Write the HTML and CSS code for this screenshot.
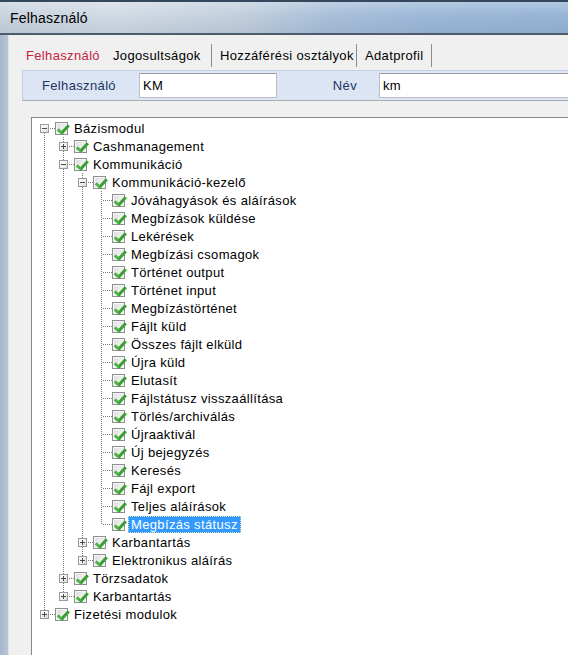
FILE: index.html
```html
<!DOCTYPE html>
<html lang="hu">
<head>
<meta charset="utf-8">
<title>Felhasználó</title>
<link rel="stylesheet" href="styles.css">
</head>
<body>
<div class="titlebar"><span class="title">Felhasználó</span></div>
<div class="frame">
  <div class="edge"></div>
  <div class="client">
    <div class="tabs">
      <span class="tab active">Felhasználó</span>
      <span class="tab t2">Jogosultságok</span>
      <span class="tab t3">Hozzáférési osztályok</span>
      <span class="tab t4">Adatprofil</span>
    </div>
    <div class="page">
      <div class="fields">
        <span class="flabel first">Felhasználó</span>
        <input class="input in1" type="text" value="KM" readonly>
        <span class="flabel second">Név</span>
        <input class="input in2" type="text" value="km" readonly>
      </div>
      <div class="tree">
        <div class="row"><span class="n top"><i class="exp minus"></i></span><span class="cb"></span><span class="lbl">Bázismodul</span></div>
        <div class="row"><span class="g v"></span><span class="n mid"><i class="exp plus"></i></span><span class="cb"></span><span class="lbl">Cashmanagement</span></div>
        <div class="row"><span class="g v"></span><span class="n mid"><i class="exp minus"></i></span><span class="cb"></span><span class="lbl">Kommunikáció</span></div>
        <div class="row"><span class="g v"></span><span class="g v"></span><span class="n mid"><i class="exp minus"></i></span><span class="cb"></span><span class="lbl">Kommunikáció-kezelő</span></div>
        <div class="row"><span class="g v"></span><span class="g v"></span><span class="g v"></span><span class="n mid"></span><span class="cb"></span><span class="lbl">Jóváhagyások és aláírások</span></div>
        <div class="row"><span class="g v"></span><span class="g v"></span><span class="g v"></span><span class="n mid"></span><span class="cb"></span><span class="lbl">Megbízások küldése</span></div>
        <div class="row"><span class="g v"></span><span class="g v"></span><span class="g v"></span><span class="n mid"></span><span class="cb"></span><span class="lbl">Lekérések</span></div>
        <div class="row"><span class="g v"></span><span class="g v"></span><span class="g v"></span><span class="n mid"></span><span class="cb"></span><span class="lbl">Megbízási csomagok</span></div>
        <div class="row"><span class="g v"></span><span class="g v"></span><span class="g v"></span><span class="n mid"></span><span class="cb"></span><span class="lbl">Történet output</span></div>
        <div class="row"><span class="g v"></span><span class="g v"></span><span class="g v"></span><span class="n mid"></span><span class="cb"></span><span class="lbl">Történet input</span></div>
        <div class="row"><span class="g v"></span><span class="g v"></span><span class="g v"></span><span class="n mid"></span><span class="cb"></span><span class="lbl">Megbízástörténet</span></div>
        <div class="row"><span class="g v"></span><span class="g v"></span><span class="g v"></span><span class="n mid"></span><span class="cb"></span><span class="lbl">Fájlt küld</span></div>
        <div class="row"><span class="g v"></span><span class="g v"></span><span class="g v"></span><span class="n mid"></span><span class="cb"></span><span class="lbl">Összes fájlt elküld</span></div>
        <div class="row"><span class="g v"></span><span class="g v"></span><span class="g v"></span><span class="n mid"></span><span class="cb"></span><span class="lbl">Újra küld</span></div>
        <div class="row"><span class="g v"></span><span class="g v"></span><span class="g v"></span><span class="n mid"></span><span class="cb"></span><span class="lbl">Elutasít</span></div>
        <div class="row"><span class="g v"></span><span class="g v"></span><span class="g v"></span><span class="n mid"></span><span class="cb"></span><span class="lbl">Fájlstátusz visszaállítása</span></div>
        <div class="row"><span class="g v"></span><span class="g v"></span><span class="g v"></span><span class="n mid"></span><span class="cb"></span><span class="lbl">Törlés/archiválás</span></div>
        <div class="row"><span class="g v"></span><span class="g v"></span><span class="g v"></span><span class="n mid"></span><span class="cb"></span><span class="lbl">Újraaktivál</span></div>
        <div class="row"><span class="g v"></span><span class="g v"></span><span class="g v"></span><span class="n mid"></span><span class="cb"></span><span class="lbl">Új bejegyzés</span></div>
        <div class="row"><span class="g v"></span><span class="g v"></span><span class="g v"></span><span class="n mid"></span><span class="cb"></span><span class="lbl">Keresés</span></div>
        <div class="row"><span class="g v"></span><span class="g v"></span><span class="g v"></span><span class="n mid"></span><span class="cb"></span><span class="lbl">Fájl export</span></div>
        <div class="row"><span class="g v"></span><span class="g v"></span><span class="g v"></span><span class="n mid"></span><span class="cb"></span><span class="lbl">Teljes aláírások</span></div>
        <div class="row"><span class="g v"></span><span class="g v"></span><span class="g v"></span><span class="n end"></span><span class="cb"></span><span class="lbl sel">Megbízás státusz</span></div>
        <div class="row"><span class="g v"></span><span class="g v"></span><span class="n mid"><i class="exp plus"></i></span><span class="cb"></span><span class="lbl">Karbantartás</span></div>
        <div class="row"><span class="g v"></span><span class="g v"></span><span class="n end"><i class="exp plus"></i></span><span class="cb"></span><span class="lbl">Elektronikus aláírás</span></div>
        <div class="row"><span class="g v"></span><span class="n mid"><i class="exp plus"></i></span><span class="cb"></span><span class="lbl">Törzsadatok</span></div>
        <div class="row"><span class="g v"></span><span class="n end"><i class="exp plus"></i></span><span class="cb"></span><span class="lbl">Karbantartás</span></div>
        <div class="row"><span class="n end"><i class="exp plus"></i></span><span class="cb"></span><span class="lbl">Fizetési modulok</span></div>
      </div>
    </div>
  </div>
</div>
</body>
</html>
```
FILE: styles.css
```css
* { box-sizing: border-box; }
html, body { margin: 0; padding: 0; }
body {
  width: 568px;
  height: 655px;
  overflow: hidden;
  font-family: "Liberation Sans", Arial, sans-serif;
  font-size: 13px;
  letter-spacing: 0.35px;
  color: #000;
  background: #aebfd2;
}

/* title bar (glass) */
.titlebar {
  height: 35px;
  border-top: 2px solid #34475d;
  border-bottom: 2px solid #4d5c6c;
  background:
    linear-gradient(180deg, rgba(255,255,255,0.25) 0%, rgba(255,255,255,0) 40%, rgba(60,80,110,0.10) 100%),
    linear-gradient(90deg, #c9d4df 0%, #d2dbe4 20%, #c3d0de 42%, #a9c0da 58%, #9db9d8 75%, #98b5d5 100%);
  display: flex;
  align-items: center;
  padding-left: 10px;
}
.title { font-size: 14px; letter-spacing: 0.2px; color: #000; }

.frame {
  display: flex;
  height: 620px;
}
.edge {
  width: 8px;
  flex: none;
  background: linear-gradient(90deg, #a3b6cb, #b7c7d8);
}
.client {
  flex: 1;
  min-width: 0;
  overflow: hidden;
  background: #f0f0f0;
  border-left: 1px solid #dfe3e8;
}

/* tabs */
.tabs {
  display: flex;
  margin-top: 9px;
  height: 23px;
  line-height: 23px;
}
.tab { flex: none; white-space: nowrap; }
.tab.active { color: #c4243a; padding-left: 17px; width: 98px; }
.t2 { width: 105px; padding-left: 6px; border-right: 1px solid #8c8c8c; }
.t3 { width: 145px; padding-left: 8px; border-right: 1px solid #8c8c8c; }
.t4 { width: 75px; padding-left: 8px; border-right: 1px solid #8c8c8c; }

.page {
  padding-left: 13px;
  padding-top: 3px;
  height: 600px;
}

/* field row */
.fields {
  display: flex;
  align-items: center;
  width: 620px;
  height: 31px;
  background: #dbe5f3;
  border-top: 1px solid #c3cfdf;
  border-left: 1px solid #c3cfdf;
  border-bottom: 1px solid #a7acb3;
  padding-left: 19px;
}
.flabel { color: #1c3563; flex: none; }
.flabel.first { width: 97px; }
.flabel.second { width: 102px; text-align: right; padding-right: 22px; }
.input {
  flex: none;
  height: 25px;
  margin: 0;
  border: 1px solid #b9bcc2;
  border-top-color: #9a9ca1;
  background: #fff;
  font-family: "Liberation Sans", Arial, sans-serif;
  font-size: 13px;
  letter-spacing: 0.35px;
  color: #000;
  padding: 0 0 0 3px;
  outline: none;
}
.in1 { width: 138px; }
.in2 { width: 220px; }

/* tree */
.tree {
  margin-top: 16px;
  margin-left: 9px;
  width: 620px;
  height: 560px;
  background: #fff;
  border-top: 1px solid #828790;
  border-left: 1px solid #828790;
  padding-top: 1px;
  padding-left: 3px;
}
.row {
  display: flex;
  align-items: center;
  height: 18px;
  white-space: nowrap;
}
.g, .n {
  flex: none;
  position: relative;
  width: 19px;
  height: 18px;
}
.v::before, .n::before {
  content: "";
  position: absolute;
  left: 9px;
  width: 1px;
  top: 0;
  bottom: 0;
  background: repeating-linear-gradient(180deg, #7a7a7a 0 1px, transparent 1px 2px);
}
.n.top::before { top: 10px; }
.n.end::before { bottom: auto; height: 10px; }
.n::after {
  content: "";
  position: absolute;
  left: 11px;
  top: 9px;
  width: 10px;
  height: 1px;
  background: repeating-linear-gradient(90deg, #7a7a7a 0 1px, transparent 1px 2px);
}
.exp {
  position: absolute;
  z-index: 1;
  left: 5px;
  top: 5px;
  width: 9px;
  height: 9px;
  border: 1px solid #9a9a9a;
  background: linear-gradient(135deg, #ffffff 0%, #f2f2f2 50%, #d9d9d9 100%);
}
.exp::before {
  content: "";
  position: absolute;
  left: 1px;
  top: 3px;
  width: 5px;
  height: 1px;
  background: #4a4a4a;
}
.exp.plus::after {
  content: "";
  position: absolute;
  left: 3px;
  top: 1px;
  width: 1px;
  height: 5px;
  background: #4a4a4a;
}

.cb {
  flex: none;
  position: relative;
  width: 13px;
  height: 13px;
  margin-left: 1px;
  border: 1px solid #8e8f8f;
  background: linear-gradient(135deg, #dcdcdc 0%, #ececec 45%, #fbfbfb 100%);
  box-shadow: inset 0 0 0 1px #f6f6f6;
}
.cb::after {
  content: "";
  position: absolute;
  left: 3px;
  top: -1px;
  width: 4px;
  height: 9px;
  border-right: 3px solid #3c9f35;
  border-bottom: 3px solid #4fb449;
  transform: rotate(42deg);
  transform-origin: 50% 60%;
}

.lbl {
  margin-left: 3px;
  padding: 0 2px;
  height: 17px;
  line-height: 15px;
  border: 1px solid transparent;
}
.lbl.sel {
  background: #3399ff;
  color: #fff;
  border: 1px dotted #d9e6b0;
}
```
